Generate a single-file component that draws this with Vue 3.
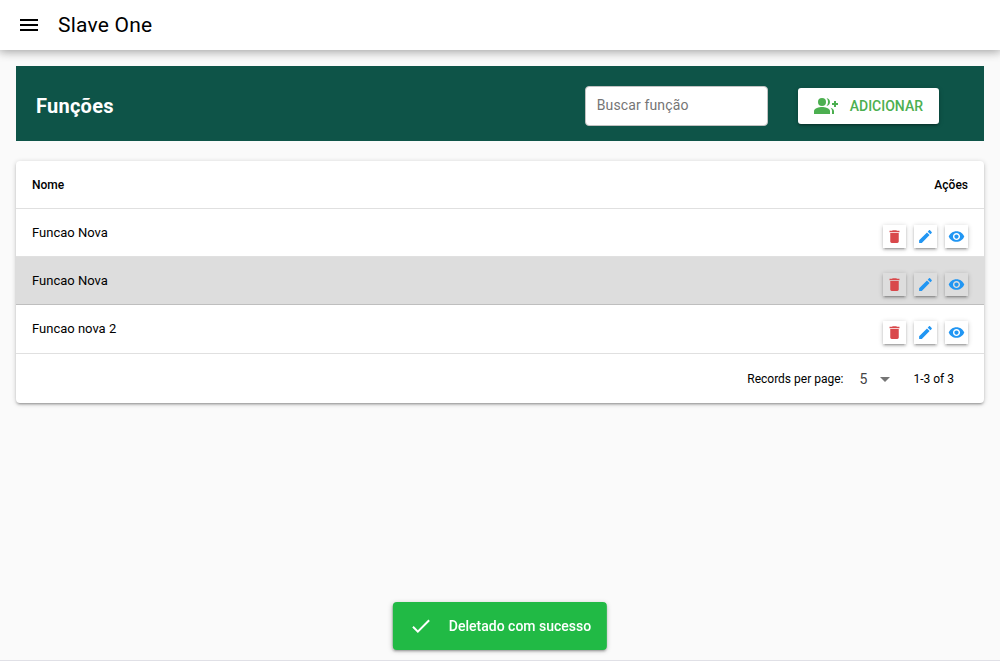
<script setup>
import { ref, computed } from 'vue'

const search = ref('')
const perPage = ref(5)
const showNotify = ref(true)

const rows = ref([
  { id: 1, nome: 'Funcao Nova' },
  { id: 2, nome: 'Funcao Nova', active: true },
  { id: 3, nome: 'Funcao nova 2' },
])

const actions = [
  {
    name: 'delete',
    label: 'Deletar',
    path: 'M6 19c0 1.1.9 2 2 2h8c1.1 0 2-.9 2-2V7H6v12zM19 4h-3.5l-1-1h-5l-1 1H5v2h14V4z',
  },
  {
    name: 'edit',
    label: 'Editar',
    path: 'M3 17.25V21h3.75L17.81 9.94l-3.75-3.75L3 17.25zM20.71 7.04c.39-.39.39-1.02 0-1.41l-2.34-2.34c-.39-.39-1.02-.39-1.41 0l-1.83 1.83 3.75 3.75 1.83-1.83z',
  },
  {
    name: 'view',
    label: 'Visualizar',
    path: 'M12 4.5C7 4.5 2.73 7.61 1 12c1.73 4.39 6 7.5 11 7.5s9.27-3.11 11-7.5c-1.73-4.39-6-7.5-11-7.5zM12 17c-2.76 0-5-2.24-5-5s2.24-5 5-5 5 2.24 5 5-2.24 5-5 5zm0-8c-1.66 0-3 1.34-3 3s1.34 3 3 3 3-1.34 3-3-1.34-3-3-3z',
  },
]

const filtered = computed(() =>
  rows.value.filter((row) => row.nome.toLowerCase().includes(search.value.toLowerCase()))
)
</script>

<template>
  <div class="layout">
    <header class="header">
      <button class="menu-btn" type="button" aria-label="Menu">
        <svg class="icon" viewBox="0 0 24 24"><path d="M3 18h18v-2H3v2zm0-5h18v-2H3v2zm0-7v2h18V6H3z" /></svg>
      </button>
      <div class="header-title">Slave One</div>
    </header>

    <main class="page">
      <section class="banner">
        <h1 class="banner-title">Funções</h1>
        <input v-model="search" class="search" type="text" placeholder="Buscar função" aria-label="Buscar função" />
        <button class="add-btn" type="button">
          <svg class="icon" viewBox="0 0 24 24">
            <path d="M22 9V7h-2v2h-2v2h2v2h2v-2h2V9z" />
            <circle cx="8" cy="8" r="4" />
            <path d="M8 13c-2.67 0-8 1.34-8 4v3h16v-3c0-2.66-5.33-4-8-4z" />
            <path d="M12.51 4.05C13.43 5.11 14 6.49 14 8s-.57 2.89-1.49 3.95C14.47 11.7 16 10.04 16 8s-1.53-3.7-3.49-3.95z" />
            <path d="M16.53 13.83C17.42 14.66 18 15.7 18 17v3h2v-3c0-1.45-1.59-2.51-3.47-3.17z" />
          </svg>
          <span>ADICIONAR</span>
        </button>
      </section>

      <section class="card">
        <table class="table">
          <thead>
            <tr>
              <th scope="col">Nome</th>
              <th scope="col" class="right">Ações</th>
            </tr>
          </thead>
          <tbody>
            <tr v-for="row in filtered" :key="row.id" :class="{ active: row.active }">
              <td>{{ row.nome }}</td>
              <td class="right">
                <div class="actions">
                  <button
                    v-for="action in actions"
                    :key="action.name"
                    type="button"
                    class="action"
                    :class="'action-' + action.name"
                    :aria-label="action.label"
                  >
                    <svg class="icon-sm" viewBox="0 0 24 24"><path :d="action.path" /></svg>
                  </button>
                </div>
              </td>
            </tr>
          </tbody>
        </table>

        <div class="table-footer">
          <label for="per-page">Records per page:</label>
          <div class="select">
            <select id="per-page" v-model="perPage">
              <option :value="5">5</option>
              <option :value="10">10</option>
              <option :value="25">25</option>
            </select>
            <svg class="icon select-arrow" viewBox="0 0 24 24"><path d="M7 10l5 5 5-5z" /></svg>
          </div>
          <span>1-{{ filtered.length }} of {{ rows.length }}</span>
        </div>
      </section>
    </main>

    <div v-if="showNotify" class="notify" role="alert">
      <svg class="icon" viewBox="0 0 24 24"><path d="M9 16.17L4.83 12l-1.42 1.41L9 19 21 7l-1.41-1.41z" /></svg>
      <span>Deletado com sucesso</span>
    </div>
  </div>
</template>

<style>
body {
  margin: 0;
  background: #fafafa;
}
</style>

<style scoped>
.layout {
  box-sizing: border-box;
  min-height: 100vh;
  border-bottom: 1px solid #e0e0e6;
  font-family: Roboto, "Liberation Sans", sans-serif;
  font-size: 14px;
  color: #000;
}

button,
input,
select {
  font-family: inherit;
}

button {
  border: 0;
  padding: 0;
  cursor: pointer;
}

.icon {
  flex: none;
  width: 24px;
  height: 24px;
  fill: currentColor;
}

.icon-sm {
  width: 17px;
  height: 17px;
  fill: currentColor;
}

.header {
  position: relative;
  display: flex;
  align-items: center;
  height: 50px;
  padding: 0 12px;
  background: #fff;
  box-shadow: 0 0 10px 2px rgba(0, 0, 0, 0.2), 0 0 10px rgba(0, 0, 0, 0.24);
}

.menu-btn {
  display: flex;
  padding: 5px;
  background: none;
  color: #000;
}

.header-title {
  padding: 0 12px;
  font-size: 21px;
  line-height: 32px;
  letter-spacing: 0.01em;
}

.page {
  padding: 16px;
}

.banner {
  display: flex;
  align-items: center;
  padding: 20px 45px 15px 20px;
  background: #0e5448;
}

.banner-title {
  flex: 1;
  margin: 0;
  font-size: 20px;
  font-weight: 700;
  line-height: 32px;
  letter-spacing: 0.0125em;
  color: #fff;
}

.search {
  box-sizing: border-box;
  width: 183px;
  height: 40px;
  margin-right: 30px;
  padding: 0 11px 2px;
  border: 1px solid #c2c2c2;
  border-radius: 4px;
  background: #fff;
  font-size: 14px;
  letter-spacing: 0.01em;

  &::placeholder {
    color: #757575;
  }
}

.add-btn {
  display: flex;
  align-items: center;
  gap: 12px;
  height: 36px;
  padding: 0 16px;
  border-radius: 3px;
  background: #fff;
  color: #4caf50;
  font-size: 14px;
  font-weight: 500;
  box-shadow: 0 1px 5px rgba(0, 0, 0, 0.2), 0 2px 2px rgba(0, 0, 0, 0.14), 0 3px 1px -2px rgba(0, 0, 0, 0.12);
}

.card {
  margin-top: 20px;
  border-radius: 4px;
  background: #fff;
  box-shadow: 0 1px 5px rgba(0, 0, 0, 0.2), 0 2px 2px rgba(0, 0, 0, 0.14), 0 3px 1px -2px rgba(0, 0, 0, 0.12);
}

.table {
  width: 100%;
  border-spacing: 0;

  th,
  td {
    box-sizing: border-box;
    height: 48px;
    padding: 0 16px;
    border-bottom: 1px solid rgba(0, 0, 0, 0.12);
    text-align: left;
    font-size: 13px;
    font-weight: 400;
  }

  th {
    font-size: 12px;
    font-weight: 500;
  }

  .right {
    text-align: right;
  }

  tbody tr:last-child td {
    border-bottom-color: transparent;
  }

  .active {
    background: #ddd;
  }

  .active td {
    border-bottom-color: #bebebe;
  }
}

.actions {
  display: flex;
  justify-content: flex-end;
  gap: 8px;
  padding-top: 8px;
}

.action {
  display: flex;
  align-items: center;
  justify-content: center;
  width: 23px;
  height: 23px;
  background: transparent;
  color: #2196f3;
  box-shadow: 0 1px 5px rgba(0, 0, 0, 0.2), 0 2px 2px rgba(0, 0, 0, 0.14), 0 3px 1px -2px rgba(0, 0, 0, 0.12);
}

.action-delete {
  color: #d9484b;
}

.table-footer {
  display: flex;
  align-items: center;
  justify-content: flex-end;
  gap: 16px;
  box-sizing: border-box;
  height: 50px;
  padding: 0 30px 0 16px;
  border-top: 1px solid rgba(0, 0, 0, 0.12);
  font-size: 12px;
}

.select {
  position: relative;
  display: flex;
  align-items: center;
  width: 38px;

  select {
    width: 100%;
    height: 24px;
    padding: 0;
    border: 0;
    background: none;
    appearance: none;
    font-size: 14px;
    color: #444;
  }
}

.select-arrow {
  position: absolute;
  right: 0;
  color: #757575;
  pointer-events: none;
}

.notify {
  position: fixed;
  bottom: 11px;
  left: 50%;
  translate: -50% 0;
  display: flex;
  align-items: center;
  gap: 16px;
  height: 48px;
  padding: 0 16px;
  border-radius: 4px;
  background: #21ba45;
  color: #fff;
  font-weight: 500;
  white-space: nowrap;
  box-shadow: 0 1px 5px rgba(0, 0, 0, 0.2), 0 2px 2px rgba(0, 0, 0, 0.14), 0 3px 1px -2px rgba(0, 0, 0, 0.12);
}
</style>
